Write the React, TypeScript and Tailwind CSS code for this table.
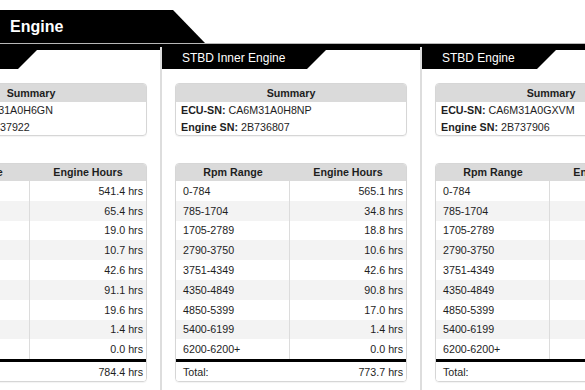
const rpmRanges = [
  "0-784",
  "785-1704",
  "1705-2789",
  "2790-3750",
  "3751-4349",
  "4350-4849",
  "4850-5399",
  "5400-6199",
  "6200-6200+",
];

type Engine = {
  title: string;
  ecu: string;
  sn: string;
  hours: string[];
  total: string;
};

const engines: Engine[] = [
  {
    title: "PORT Engine",
    ecu: "CA6M31A0H6GN",
    sn: "2B737922",
    hours: ["541.4", "65.4", "19.0", "10.7", "42.6", "91.1", "19.6", "1.4", "0.0"],
    total: "784.4",
  },
  {
    title: "STBD Inner Engine",
    ecu: "CA6M31A0H8NP",
    sn: "2B736807",
    hours: ["565.1", "34.8", "18.8", "10.6", "42.6", "90.8", "17.0", "1.4", "0.0"],
    total: "773.7",
  },
  {
    title: "STBD Engine",
    ecu: "CA6M31A0GXVM",
    sn: "2B737906",
    hours: ["552.9", "41.2", "18.5", "10.9", "43.0", "89.7", "18.1", "1.3", "0.0"],
    total: "775.6",
  },
];

function EngineCard({ engine }: { engine: Engine }) {
  return (
    <div className="w-[258px] shrink-0 bg-white">
      {/* tab header */}
      <div className="flex h-[22px]">
        <div className="bg-black text-white text-[12px] pl-[20px] pr-[22px] flex items-center whitespace-nowrap">
          {engine.title}
        </div>
        <svg width="19" height="22" className="shrink-0 block">
          <polygon points="0,0 19,0 19,3 0,22" fill="#000" />
        </svg>
        <div className="flex-1 border-t-[3px] border-black" />
      </div>

      <div className="px-[13px] pt-[14px] text-[10.7px]">
        {/* summary */}
        <div className="rounded-[4px] border border-[#d6d6d6] overflow-hidden shadow-[0_1px_1px_rgba(0,0,0,0.05)]">
          <div className="h-[18px] bg-[#dadada] font-bold flex items-center justify-center">Summary</div>
          <div className="h-[16.5px] px-[5px] flex items-center whitespace-nowrap">
            <span className="font-bold">ECU-SN:</span>&nbsp;{engine.ecu}
          </div>
          <div className="h-[16.5px] px-[5px] flex items-center whitespace-nowrap">
            <span className="font-bold">Engine SN:</span>&nbsp;{engine.sn}
          </div>
        </div>

        {/* rpm table */}
        <div className="mt-[27px] rounded-[4px] border border-[#d6d6d6] overflow-hidden shadow-[0_1px_1px_rgba(0,0,0,0.05)]">
          <div className="grid grid-cols-[114px_1fr] h-[17px] bg-[#dadada] font-bold">
            <div className="flex items-center justify-center">Rpm Range</div>
            <div className="flex items-center justify-center">Engine Hours</div>
          </div>
          {rpmRanges.map((r, i) => (
            <div
              key={r}
              className={`grid grid-cols-[114px_1fr] h-[19.8px] ${i % 2 === 1 ? "bg-[#f3f3f3]" : "bg-white"}`}
            >
              <div className="flex items-center pl-[7px] border-r border-[#dcdcdc]">{r}</div>
              <div className="flex items-center justify-end pr-[3px]">{engine.hours[i]} hrs</div>
            </div>
          ))}
          <div className="h-[3px] bg-black" />
          <div className="h-[19px] flex items-center justify-between pl-[7px] pr-[3px] bg-white">
            <span>Total:</span>
            <span>{engine.total} hrs</span>
          </div>
        </div>
      </div>
    </div>
  );
}

export default function App() {
  return (
    <div className="w-[585px] h-[390px] overflow-hidden bg-white text-[#1e1e1e] font-['Liberation_Sans',Arial,sans-serif]">
      <div className="pt-[10px] flex">
        <div className="h-[33px] w-[173px] bg-black text-white font-bold text-[16px] pl-[10px] flex items-center">
          Engine
        </div>
        <svg width="32" height="33" className="block">
          <polygon points="0,0 0,33 32,33" fill="#000" />
        </svg>
      </div>
      <div className="h-px bg-[#b8b8b8]" />
      <div className="-ml-[98px] flex gap-[2px] h-[346px] bg-[#dddddd] border-t-[3px] border-black">
        {engines.map((e) => (
          <EngineCard key={e.title} engine={e} />
        ))}
      </div>
    </div>
  );
}
